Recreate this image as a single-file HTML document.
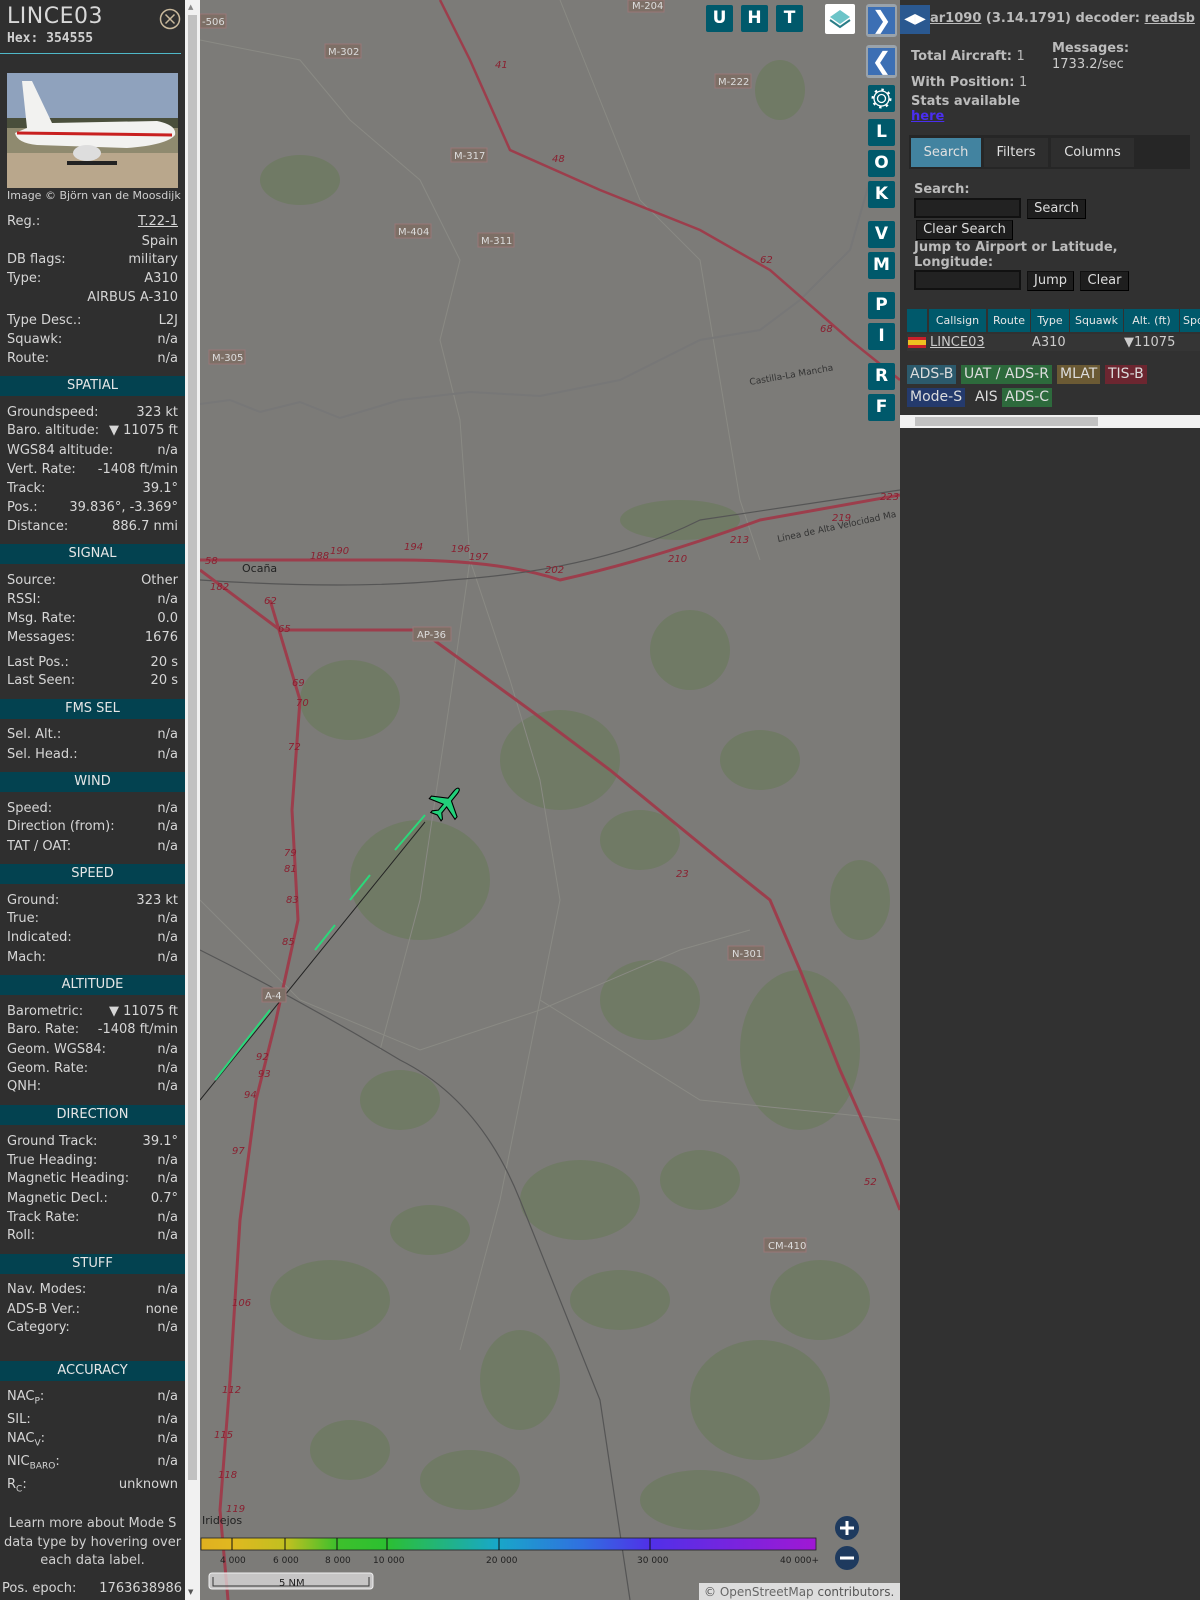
<!DOCTYPE html>
<html><head><meta charset="utf-8">
<style>
*{margin:0;padding:0;box-sizing:border-box}
body{width:1200px;height:1600px;overflow:hidden;background:#313131;font-family:"DejaVu Sans","Liberation Sans",sans-serif;font-size:13px;color:#d6d6d6;position:relative}
.a{position:absolute}
#lp{left:0;top:0;width:185px;height:1600px;background:#2f2f2f}
.r{position:absolute;left:7px;width:171px;height:18px;line-height:18px;white-space:nowrap}
.r b{font-weight:normal;float:right}
.h{position:absolute;left:0;width:185px;height:20px;line-height:20px;background:#034250;color:#e6e6e6;text-align:center}
#sb{left:185px;top:0;width:15px;height:1600px;background:#f1f1f1}
#map{left:200px;top:0;width:700px;height:1600px;background:#7c7b78;overflow:hidden}
.btn{position:absolute;background:#00596b;color:#fff;font-weight:bold;font-size:17px;text-align:center;border-radius:2px;font-family:"DejaVu Sans",sans-serif}
.vb{left:668px;width:27px;height:27px;line-height:27px}
.tb{top:5px;width:27px;height:27px;line-height:27px}
#rp{left:900px;top:0;width:300px;height:1600px;background:#313131;color:#cfcfcf}
.bb{position:absolute;background:#1e1e1e;border:1px solid #111;border-right-color:#000;border-bottom-color:#000;color:#ddd;text-align:center;font-size:13px;height:20px;line-height:18px}
.inp{position:absolute;background:#222;border:2px solid #111;height:20px}
.th{position:absolute;top:309px;height:23px;line-height:23px;background:#00596b;color:#e6e6e6;font-size:11px;text-align:center}
.bd{position:absolute;height:19px;line-height:19px;padding:0 3px;font-size:14px;color:#ddd}
</style></head><body>

<div id="lp" class="a">
<div class="a" style="left:7px;top:4px;font-size:22px;color:#d8d8d8;letter-spacing:0.5px">LINCE03</div>
<div class="a" style="left:7px;top:31px;font-size:13px;font-weight:bold;font-family:'DejaVu Sans Mono',monospace;color:#d0d0d0">Hex: 354555</div>
<svg class="a" style="left:158px;top:7px" width="24" height="24"><circle cx="12" cy="12" r="9.5" fill="none" stroke="#c9b99c" stroke-width="1.5"/><path d="M7.5 7.5L16.5 16.5M16.5 7.5L7.5 16.5" stroke="#c9b99c" stroke-width="1.5"/></svg>
<div class="a" style="left:0;top:53px;width:181px;height:1px;background:#4fb8c8"></div>
<svg class="a" style="left:7px;top:73px" width="171" height="115">
<rect width="171" height="45" fill="#8fa2bd"/><rect y="45" width="171" height="10" fill="#4a4f3c"/><rect y="55" width="171" height="25" fill="#8f8a6f"/><rect y="80" width="171" height="35" fill="#b9a78c"/>
<path d="M15 8 L25 8 L45 50 L150 48 Q170 52 168 62 Q160 72 120 75 L30 72 Q10 70 8 60 L20 55 Z" fill="#f2f2f0"/>
<path d="M10 60 L165 62" stroke="#c82020" stroke-width="3"/>
<ellipse cx="80" cy="80" rx="14" ry="8" fill="#ddd"/><rect x="60" y="88" width="50" height="4" fill="#222"/>
</svg>
<div class="a" style="left:7px;top:189px;font-size:11px;color:#cfcfcf">Image © Björn van de Moosdijk</div>

<div class="r" style="top:213px">Reg.:<b style="text-decoration:underline">T.22-1</b></div>
<div class="r" style="top:233px"><b>Spain</b></div>
<div class="r" style="top:251px">DB flags:<b>military</b></div>
<div class="r" style="top:270px">Type:<b>A310</b></div>
<div class="r" style="top:289px"><b>AIRBUS A-310</b></div>
<div class="r" style="top:312px">Type Desc.:<b>L2J</b></div>
<div class="r" style="top:331px">Squawk:<b>n/a</b></div>
<div class="r" style="top:350px">Route:<b>n/a</b></div>
<div class="h" style="top:376px">SPATIAL</div>
<div class="r" style="top:404px">Groundspeed:<b>323 kt</b></div>
<div class="r" style="top:422px">Baro. altitude:<b>▼ 11075 ft</b></div>
<div class="r" style="top:442px">WGS84 altitude:<b>n/a</b></div>
<div class="r" style="top:461px">Vert. Rate:<b>-1408 ft/min</b></div>
<div class="r" style="top:480px">Track:<b>39.1°</b></div>
<div class="r" style="top:499px">Pos.:<b>39.836°, -3.369°</b></div>
<div class="r" style="top:518px">Distance:<b>886.7 nmi</b></div>
<div class="h" style="top:544px">SIGNAL</div>
<div class="r" style="top:572px">Source:<b>Other</b></div>
<div class="r" style="top:591px">RSSI:<b>n/a</b></div>
<div class="r" style="top:610px">Msg. Rate:<b>0.0</b></div>
<div class="r" style="top:629px">Messages:<b>1676</b></div>
<div class="r" style="top:654px">Last Pos.:<b>20 s</b></div>
<div class="r" style="top:672px">Last Seen:<b>20 s</b></div>
<div class="h" style="top:699px">FMS SEL</div>
<div class="r" style="top:726px">Sel. Alt.:<b>n/a</b></div>
<div class="r" style="top:746px">Sel. Head.:<b>n/a</b></div>
<div class="h" style="top:772px">WIND</div>
<div class="r" style="top:800px">Speed:<b>n/a</b></div>
<div class="r" style="top:818px">Direction (from):<b>n/a</b></div>
<div class="r" style="top:838px">TAT / OAT:<b>n/a</b></div>
<div class="h" style="top:864px">SPEED</div>
<div class="r" style="top:892px">Ground:<b>323 kt</b></div>
<div class="r" style="top:910px">True:<b>n/a</b></div>
<div class="r" style="top:929px">Indicated:<b>n/a</b></div>
<div class="r" style="top:949px">Mach:<b>n/a</b></div>
<div class="h" style="top:975px">ALTITUDE</div>
<div class="r" style="top:1003px">Barometric:<b>▼ 11075 ft</b></div>
<div class="r" style="top:1021px">Baro. Rate:<b>-1408 ft/min</b></div>
<div class="r" style="top:1041px">Geom. WGS84:<b>n/a</b></div>
<div class="r" style="top:1060px">Geom. Rate:<b>n/a</b></div>
<div class="r" style="top:1078px">QNH:<b>n/a</b></div>
<div class="h" style="top:1105px">DIRECTION</div>
<div class="r" style="top:1133px">Ground Track:<b>39.1°</b></div>
<div class="r" style="top:1152px">True Heading:<b>n/a</b></div>
<div class="r" style="top:1170px">Magnetic Heading:<b>n/a</b></div>
<div class="r" style="top:1190px">Magnetic Decl.:<b>0.7°</b></div>
<div class="r" style="top:1209px">Track Rate:<b>n/a</b></div>
<div class="r" style="top:1227px">Roll:<b>n/a</b></div>
<div class="h" style="top:1254px">STUFF</div>
<div class="r" style="top:1281px">Nav. Modes:<b>n/a</b></div>
<div class="r" style="top:1301px">ADS-B Ver.:<b>none</b></div>
<div class="r" style="top:1319px">Category:<b>n/a</b></div>
<div class="h" style="top:1361px">ACCURACY</div>
<div class="r" style="top:1388px">NAC<sub style="font-size:9px">P</sub>:<b>n/a</b></div>
<div class="r" style="top:1411px">SIL:<b>n/a</b></div>
<div class="r" style="top:1430px">NAC<sub style="font-size:9px">V</sub>:<b>n/a</b></div>
<div class="r" style="top:1453px">NIC<sub style="font-size:9px">BARO</sub>:<b>n/a</b></div>
<div class="r" style="top:1476px">R<sub style="font-size:9px">C</sub>:<b>unknown</b></div>
<div class="a" style="left:0;top:1515px;width:185px;text-align:center;line-height:18.5px;color:#cfcfcf">Learn more about Mode S data type by hovering over each data label.</div>
<div class="r" style="top:1580px;left:2px;width:180px">Pos. epoch:<b>1763638986</b></div>
</div>
<div id="sb" class="a"><div class="a" style="left:3px;top:15px;width:9px;height:1465px;background:#c1c1c1"></div>
<div class="a" style="left:3px;top:3px;font-size:7px;color:#888">▲</div><div class="a" style="left:3px;top:1588px;font-size:7px;color:#555">▼</div></div>

<div id="map" class="a">
<svg class="a" style="left:0;top:0" width="700" height="1600" viewBox="200 0 700 1600">
<g fill="#6e7a62" opacity="0.85">
<ellipse cx="300" cy="180" rx="40" ry="25"/><ellipse cx="780" cy="90" rx="25" ry="30"/><ellipse cx="680" cy="520" rx="60" ry="20"/>
<ellipse cx="560" cy="760" rx="60" ry="50"/><ellipse cx="420" cy="880" rx="70" ry="60"/><ellipse cx="650" cy="1000" rx="50" ry="40"/>
<ellipse cx="800" cy="1050" rx="60" ry="80"/><ellipse cx="580" cy="1200" rx="60" ry="40"/><ellipse cx="330" cy="1300" rx="60" ry="40"/>
<ellipse cx="520" cy="1380" rx="40" ry="50"/><ellipse cx="760" cy="1400" rx="70" ry="60"/><ellipse cx="350" cy="700" rx="50" ry="40"/>
<ellipse cx="690" cy="650" rx="40" ry="40"/><ellipse cx="820" cy="1300" rx="50" ry="40"/><ellipse cx="400" cy="1100" rx="40" ry="30"/>
<ellipse cx="620" cy="1300" rx="50" ry="30"/><ellipse cx="700" cy="1180" rx="40" ry="30"/><ellipse cx="430" cy="1230" rx="40" ry="25"/>
<ellipse cx="640" cy="840" rx="40" ry="30"/><ellipse cx="760" cy="760" rx="40" ry="30"/><ellipse cx="470" cy="1480" rx="50" ry="30"/>
<ellipse cx="700" cy="1500" rx="60" ry="30"/><ellipse cx="350" cy="1450" rx="40" ry="30"/><ellipse cx="860" cy="900" rx="30" ry="40"/>
</g>
<g fill="none" stroke="#8a8a84" stroke-width="1">
<path d="M200 40 L300 60 L350 120 L420 180 L460 260 L440 340 L460 420 L470 560 L450 700 L420 900 L380 1050"/>
<path d="M560 0 L600 100 L640 200 L700 260 L720 380 L740 500 L760 560"/>
<path d="M470 560 L510 680 L540 780 L560 900 L540 1000 L500 1200 L460 1350"/>
<path d="M540 1000 L700 1100 L900 1120"/><path d="M200 900 L300 1000 L420 1050 L540 1010 L680 950 L750 930"/>
</g>
<path d="M200 404 L230 400 L260 412 L300 402 L340 418 L400 400 L470 392 L540 396 L620 380 L700 340 L760 330 L800 300 L850 250 L870 180" fill="none" stroke="#777" stroke-width="2"/>
<path d="M200 560 Q300 560 400 560 Q500 560 560 580 Q650 560 760 520 L900 495" fill="none" stroke="#9c3e4c" stroke-width="3"/>
<path d="M200 580 Q350 590 450 580 Q600 570 700 520 L900 490" fill="none" stroke="#555" stroke-width="1.2"/>
<path d="M200 570 L280 630 L420 630 L530 710 L610 770 L720 860 L770 900 L800 970 L840 1070 L880 1160 L900 1210" fill="none" stroke="#9c3e4c" stroke-width="3"/>
<path d="M270 600 L300 700 L292 810 L298 920 L276 1020 L256 1100 L240 1220 L230 1380 L220 1510 L228 1600" fill="none" stroke="#9c3e4c" stroke-width="3"/>
<path d="M440 0 L470 60 L510 150 L600 190 L700 230 L770 270 L850 340 L900 380" fill="none" stroke="#9c3e4c" stroke-width="2.5"/>
<path d="M200 950 Q300 1000 400 1060 Q480 1100 520 1200 Q560 1300 600 1400 L630 1600" fill="none" stroke="#555" stroke-width="1.2"/>
<path d="M200 1100 L425 822" stroke="#222" stroke-width="1"/>
<path d="M215 1080 L270 1010 M315 950 L335 925 M350 900 L370 875 M395 850 L425 815" stroke="#2bd87a" stroke-width="2"/>
<g transform="translate(447,803) rotate(39) scale(1.1)">
<path d="M0 -17 Q2 -17 2 -12 L2 -4 L15 4 L15 7 L2 3 L2 10 L6 14 L6 16 L0 14 L-6 16 L-6 14 L-2 10 L-2 3 L-15 7 L-15 4 L-2 -4 L-2 -12 Q-2 -17 0 -17Z" fill="#22d07a" stroke="#000" stroke-width="1"/>
</g>
<g font-size="10" fill="#ddd" font-family="DejaVu Sans">
<rect x="325" y="44" width="36" height="14" fill="#7d6f66" stroke="#977"/><text x="328" y="55">M-302</text>
<rect x="715" y="74" width="36" height="14" fill="#7d6f66" stroke="#977"/><text x="718" y="85">M-222</text>
<rect x="451" y="148" width="36" height="14" fill="#7d6f66" stroke="#977"/><text x="454" y="159">M-317</text>
<rect x="395" y="224" width="36" height="14" fill="#7d6f66" stroke="#977"/><text x="398" y="235">M-404</text>
<rect x="478" y="233" width="36" height="14" fill="#7d6f66" stroke="#977"/><text x="481" y="244">M-311</text>
<rect x="209" y="350" width="36" height="14" fill="#7d6f66" stroke="#977"/><text x="212" y="361">M-305</text>
<rect x="413" y="627" width="38" height="14" fill="#7d6f66" stroke="#977"/><text x="417" y="638">AP-36</text>
<rect x="728" y="946" width="36" height="14" fill="#7d6f66" stroke="#977"/><text x="732" y="957">N-301</text>
<rect x="764" y="1238" width="42" height="14" fill="#7d6f66" stroke="#977"/><text x="768" y="1249">CM-410</text>
<rect x="262" y="988" width="24" height="14" fill="#7d6f66" stroke="#977"/><text x="265" y="999">A-4</text>
<rect x="628" y="0" width="36" height="12" fill="#7d6f66" stroke="#977"/><text x="632" y="9">M-204</text>
<rect x="200" y="14" width="26" height="14" fill="#7d6f66" stroke="#977"/><text x="202" y="25">-506</text>
<text x="242" y="572" fill="#222" font-size="11">Ocaña</text>
<text x="202" y="1524" fill="#222" font-size="11">Iridejos</text>
<text x="778" y="542" fill="#333" font-size="9" transform="rotate(-12 778 542)">Línea de Alta Velocidad Ma</text>
<text x="750" y="385" fill="#333" font-size="9" transform="rotate(-10 750 385)">Castilla-La Mancha</text>
</g>
<g font-size="10" fill="#8a2030" font-style="italic" font-family="DejaVu Sans">
<text x="205" y="564">58</text><text x="210" y="590">182</text><text x="264" y="604">62</text><text x="278" y="632">65</text>
<text x="292" y="686">69</text><text x="296" y="706">70</text><text x="288" y="750">72</text><text x="284" y="856">79</text>
<text x="284" y="872">81</text><text x="286" y="903">83</text><text x="282" y="945">85</text><text x="256" y="1060">92</text>
<text x="258" y="1077">93</text><text x="244" y="1098">94</text><text x="232" y="1154">97</text><text x="232" y="1306">106</text>
<text x="222" y="1393">112</text><text x="214" y="1438">115</text><text x="218" y="1478">118</text><text x="226" y="1512">119</text>
<text x="310" y="559">188</text><text x="330" y="554">190</text><text x="404" y="550">194</text><text x="451" y="552">196</text>
<text x="469" y="560">197</text><text x="545" y="573">202</text><text x="668" y="562">210</text><text x="730" y="543">213</text>
<text x="832" y="521">219</text><text x="880" y="500">223</text><text x="495" y="68">41</text><text x="552" y="162">48</text>
<text x="760" y="263">62</text><text x="820" y="332">68</text><text x="676" y="877">23</text><text x="864" y="1185">52</text>
</g>
<rect x="201" y="1538" width="615" height="12" fill="url(#cg)" stroke="#222" stroke-width="0.8"/>
<defs><linearGradient id="cg" x1="201" x2="816" gradientUnits="userSpaceOnUse">
<stop offset="0" stop-color="#e0b020"/><stop offset="0.05" stop-color="#e0b820"/><stop offset="0.14" stop-color="#c0c020"/><stop offset="0.22" stop-color="#3ec02c"/><stop offset="0.3" stop-color="#2cc030"/><stop offset="0.48" stop-color="#18a8c8"/><stop offset="0.62" stop-color="#3070e0"/><stop offset="0.73" stop-color="#5030e8"/><stop offset="1" stop-color="#a018d4"/>
</linearGradient></defs>
<g stroke="#111" stroke-width="1"><path d="M232 1538v12M285 1538v12M337 1538v12M387 1538v12M499 1538v12M650 1538v12"/></g>
<g font-size="9" fill="#222" font-family="DejaVu Sans"><text x="220" y="1563">4 000</text><text x="273" y="1563">6 000</text><text x="325" y="1563">8 000</text><text x="373" y="1563">10 000</text><text x="486" y="1563">20 000</text><text x="637" y="1563">30 000</text><text x="780" y="1563">40 000+</text></g>
<rect x="209" y="1573" width="164" height="16" rx="3" fill="#e6e6e6" fill-opacity="0.7" stroke="#eee"/>
<path d="M213 1577 v9 h156 v-9" fill="none" stroke="#333"/><text x="279" y="1586" font-size="10" fill="#222">5 NM</text>
<circle cx="847" cy="1528" r="12" fill="#1e3a5e"/><path d="M840 1528h14M847 1521v14" stroke="#fff" stroke-width="3"/>
<circle cx="847" cy="1558" r="12" fill="#1e3a5e"/><path d="M840 1558h14" stroke="#fff" stroke-width="3"/>
<rect x="699" y="1583" width="201" height="17" fill="#eee" fill-opacity="0.85"/>
<text x="704" y="1596" font-size="12" fill="#555">© <tspan fill="#666">OpenStreetMap</tspan> contributors.</text>
</svg>
<div class="btn tb" style="left:506px">U</div>
<div class="btn tb" style="left:541px">H</div>
<div class="btn tb" style="left:576px">T</div>
<div class="a" style="left:625px;top:4px;width:30px;height:30px;background:#fff;border-radius:2px">
<svg width="30" height="30"><path d="M15 6 L25 13 L15 20 L5 13Z" fill="#6cc4c8"/><path d="M5 16 L15 23 L25 16" fill="none" stroke="#2a7d88" stroke-width="2"/></svg></div>
<div class="a" style="left:666px;top:4px;width:31px;height:33px;background:#9aa3ab;border-radius:3px"><div class="a" style="left:2px;top:3px;width:27px;height:27px;background:#3c6fb4;color:#fff;font-size:24px;text-align:center;line-height:26px;font-weight:bold">❯</div></div>
<div class="a" style="left:666px;top:45px;width:31px;height:33px;background:#9aa3ab;border-radius:3px"><div class="a" style="left:2px;top:3px;width:27px;height:27px;background:#3c6fb4;color:#fff;font-size:24px;text-align:center;line-height:26px;font-weight:bold">❮</div></div>
<div class="btn vb" style="top:85px"><svg width="27" height="27"><circle cx="13.5" cy="13.5" r="4" fill="none" stroke="#fff" stroke-width="1.3"/><circle cx="13.5" cy="13.5" r="7.5" fill="none" stroke="#fff" stroke-width="1.3"/><circle cx="13.5" cy="13.5" r="9" fill="none" stroke="#fff" stroke-width="2" stroke-dasharray="2.5 4.5"/></svg></div>
<div class="btn vb" style="top:119px">L</div>
<div class="btn vb" style="top:150px">O</div>
<div class="btn vb" style="top:181px">K</div>
<div class="btn vb" style="top:221px">V</div>
<div class="btn vb" style="top:252px">M</div>
<div class="btn vb" style="top:292px">P</div>
<div class="btn vb" style="top:323px">I</div>
<div class="btn vb" style="top:363px">R</div>
<div class="btn vb" style="top:394px">F</div>
</div>

<div id="rp" class="a">
<div class="a" style="left:0;top:5px;width:30px;height:29px;background:#2a5890;color:#fff;font-size:14px;line-height:28px;text-align:center">◀▶</div>
<div class="a" style="left:30px;top:11px;font-weight:bold;font-size:13px;color:#bbb;white-space:nowrap"><u>ar1090</u> (3.14.1791) decoder: <u>readsb</u></div>
<div class="a" style="left:11px;top:49px;font-weight:bold;color:#bbb">Total Aircraft: <span style="font-weight:normal">1</span></div>
<div class="a" style="left:152px;top:41px;font-weight:bold;color:#bbb">Messages:</div>
<div class="a" style="left:152px;top:57px;color:#ccc">1733.2/sec</div>
<div class="a" style="left:11px;top:75px;font-weight:bold;color:#bbb">With Position: <span style="font-weight:normal">1</span></div>
<div class="a" style="left:11px;top:94px;font-weight:bold;color:#bbb">Stats available</div>
<div class="a" style="left:11px;top:109px;font-weight:bold;color:#4a2ef0;text-decoration:underline">here</div>
<div class="a" style="left:9px;top:135px;width:281px;height:34px;background:#262626"></div>
<div class="a" style="left:11px;top:138px;width:70px;height:29px;background:#4283a0;line-height:29px;text-align:center;color:#e0e0e0">Search</div>
<div class="a" style="left:84px;top:138px;width:64px;height:29px;background:#2e2e2e;line-height:29px;text-align:center;color:#e0e0e0">Filters</div>
<div class="a" style="left:151px;top:138px;width:83px;height:29px;background:#2e2e2e;line-height:29px;text-align:center;color:#e0e0e0">Columns</div>
<div class="a" style="left:14px;top:182px;font-weight:bold;color:#bbb">Search:</div>
<div class="inp" style="left:14px;top:198px;width:107px"></div>
<div class="bb" style="left:127px;top:199px;width:59px">Search</div>
<div class="bb" style="left:16px;top:220px;width:97px">Clear Search</div>
<div class="a" style="left:14px;top:240px;font-weight:bold;color:#bbb;line-height:15px">Jump to Airport or Latitude,<br>Longitude:</div>
<div class="inp" style="left:14px;top:270px;width:107px"></div>
<div class="bb" style="left:127px;top:271px;width:47px">Jump</div>
<div class="bb" style="left:180px;top:271px;width:49px">Clear</div>
<div class="th" style="left:7px;width:20px"></div>
<div class="th" style="left:29px;width:57px">Callsign</div>
<div class="th" style="left:88px;width:42px">Route</div>
<div class="th" style="left:131px;width:38px">Type</div>
<div class="th" style="left:170px;width:53px">Squawk</div>
<div class="th" style="left:224px;width:55px">Alt. (ft)</div>
<div class="th" style="left:280px;width:20px;text-align:left;padding-left:3px">Spd</div>
<div class="a" style="left:7px;top:334px;width:293px;height:17px;background:#353535"></div>
<div class="a" style="left:8px;top:337px;width:18px;height:11px;background:#c8202a"><div style="margin-top:3px;height:5px;background:#f0c020"></div></div>
<div class="a" style="left:30px;top:334px;color:#ccc;text-decoration:underline;line-height:17px">LINCE03</div>
<div class="a" style="left:132px;top:334px;color:#ccc;line-height:17px">A310</div>
<div class="a" style="left:224px;top:334px;color:#ccc;line-height:17px">▼11075</div>
<div class="bd" style="left:7px;top:365px;background:#2c5a6c">ADS-B</div>
<div class="bd" style="left:61px;top:365px;background:#2d6a3c">UAT / ADS-R</div>
<div class="bd" style="left:157px;top:365px;background:#6b5a34">MLAT</div>
<div class="bd" style="left:205px;top:365px;background:#6c2630">TIS-B</div>
<div class="bd" style="left:7px;top:388px;background:#243a6c">Mode-S</div>
<div class="bd" style="left:72px;top:388px">AIS</div>
<div class="bd" style="left:102px;top:388px;background:#2d6a3c">ADS-C</div>
<div class="a" style="left:0;top:415px;width:300px;height:13px;background:#f1f1f1"><div class="a" style="left:15px;top:2px;width:183px;height:9px;background:#c1c1c1"></div></div>
</div>
</body></html>
